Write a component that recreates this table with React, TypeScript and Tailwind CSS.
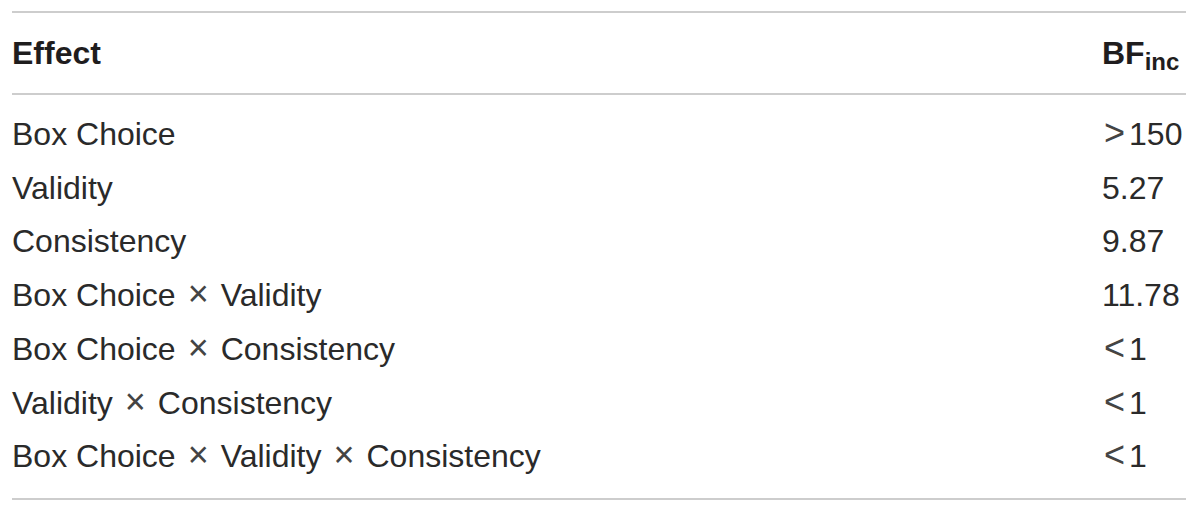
const rows: [string, string][] = [
  ["Box Choice", ">150"],
  ["Validity", "5.27"],
  ["Consistency", "9.87"],
  ["Box Choice × Validity", "11.78"],
  ["Box Choice × Consistency", "<1"],
  ["Validity × Consistency", "<1"],
  ["Box Choice × Validity × Consistency", "<1"],
];

function Effect({ label }: { label: string }) {
  const parts = label.split(" × ");
  return (
    <div>
      {parts.map((p, i) => (
        <span key={p}>
          {i > 0 && <span className="mx-[2px] text-[36px] leading-none text-[#444]"> × </span>}
          {p}
        </span>
      ))}
    </div>
  );
}

function Value({ value }: { value: string }) {
  const sign = value[0] === ">" || value[0] === "<" ? value[0] : null;
  return (
    <div>
      {sign && <span className="ml-[2px] mr-[4px] text-[36px] leading-none text-[#444]">{sign}</span>}
      {sign ? value.slice(1) : value}
    </div>
  );
}

export default function App() {
  return (
    <div className="h-[513px] w-[1200px] bg-white px-[12px] pt-[11px] font-['Liberation_Sans',Arial,sans-serif] text-[32px] text-[#2a2a2a]">
      <div className="w-[1174px] border-y-2 border-[#cdcdcd]">
        <div className="grid grid-cols-[1090px_1fr] border-b-2 border-[#cdcdcd] py-[13px] font-bold leading-[54px] text-[#1f1d1e]">
          <div>Effect</div>
          <div>
            BF<span className="align-[-6px] text-[24px] leading-none">inc</span>
          </div>
        </div>
        <div className="pt-[13px] pb-[14px]">
          {rows.map(([effect, bf]) => (
            <div key={effect} className="grid grid-cols-[1090px_1fr] leading-[53.7px]">
              <Effect label={effect} />
              <Value value={bf} />
            </div>
          ))}
        </div>
      </div>
    </div>
  );
}
